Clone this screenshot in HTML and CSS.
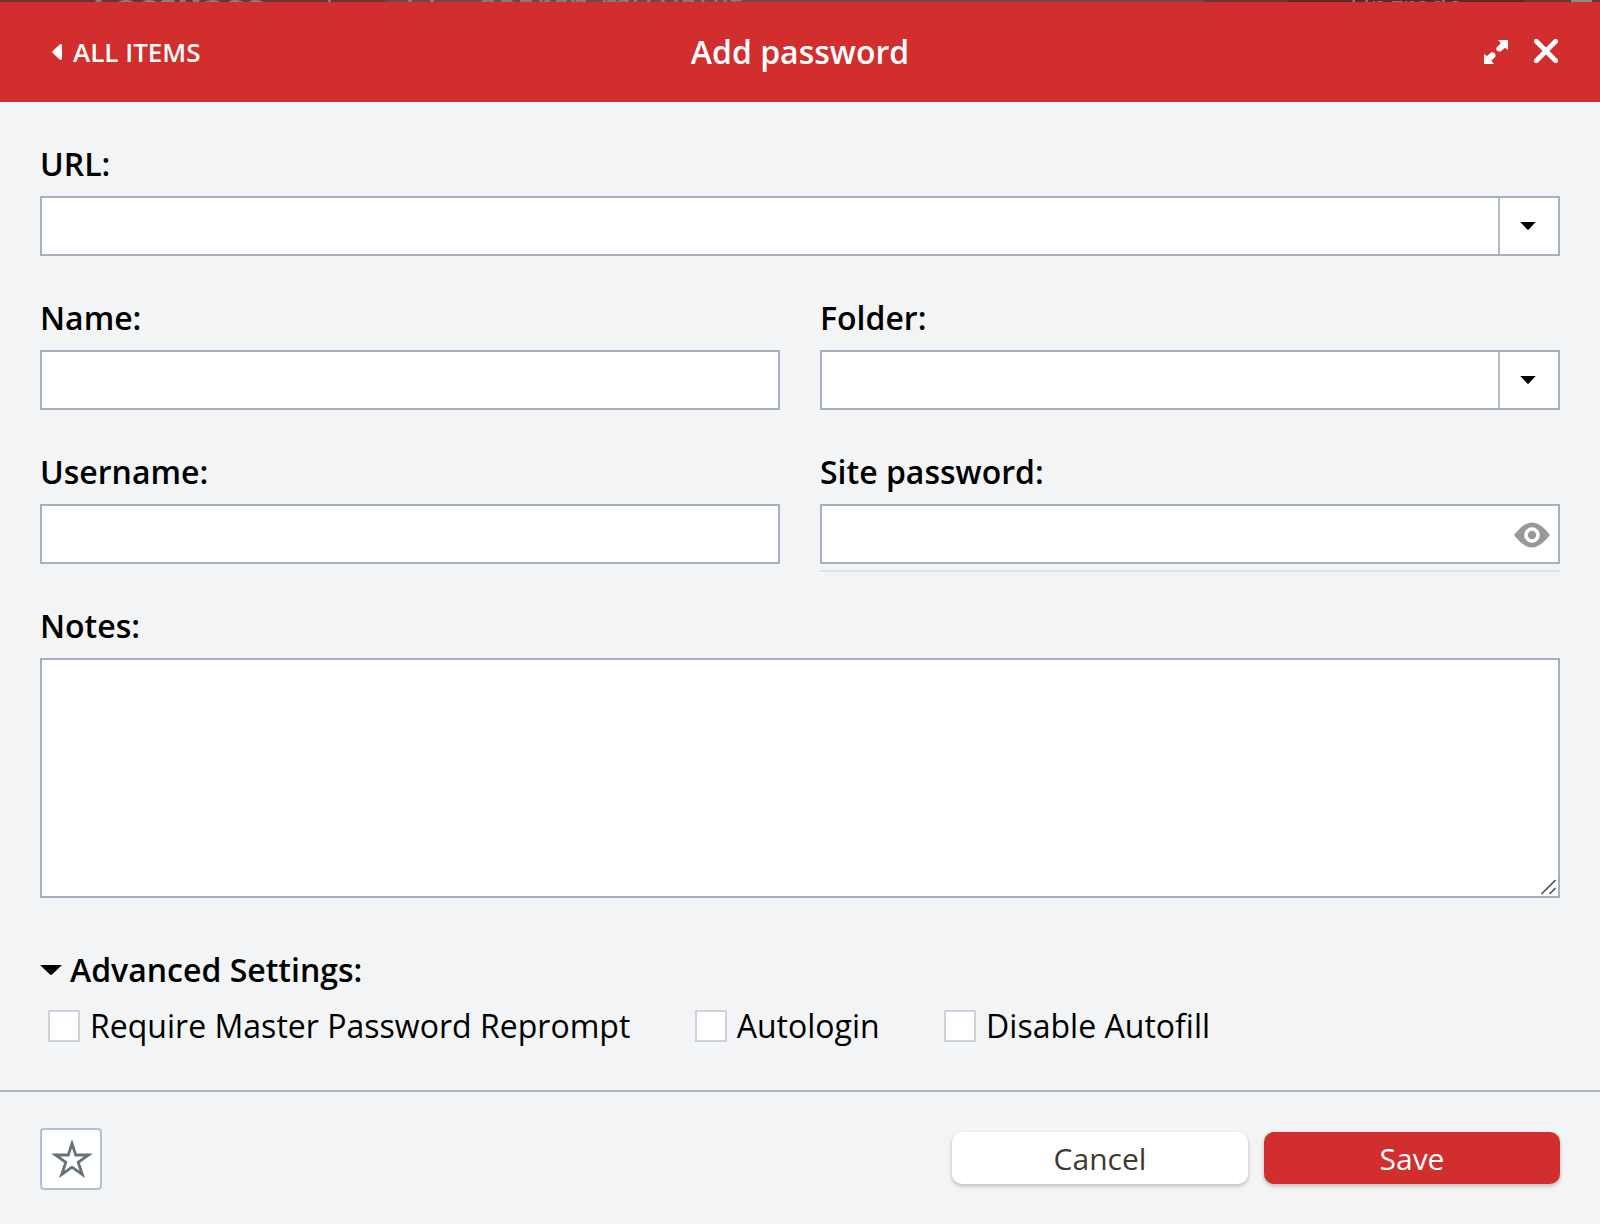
FILE: index.html
```html
<!DOCTYPE html>
<html lang="en">
<head>
<meta charset="utf-8">
<title>Add password</title>
<link rel="stylesheet" href="styles.css">
</head>
<body>
<div class="backdrop" aria-hidden="true">
  <span class="behind brand">LastPass</span>
  <span class="behind bar"></span>
  <span class="behind mark"></span>
  <span class="behind search">search my vault</span>
  <span class="behind upgrade">Upgrade</span>
  <span class="behind avatar"></span>
</div>
<form class="dialog">
  <header class="header">
    <a class="back"><svg width="10" height="16" viewBox="0 0 10 16"><path d="M10 1.2V14.8Q9.4 16.6 7.6 15.4L.8 9Q-.4 8 .8 7L7.6.6Q9.4-.6 10 1.2Z" fill="#fff"/></svg>ALL ITEMS</a>
    <h1 class="title">Add password</h1>
    <div class="tools">
      <svg width="24" height="24" viewBox="0 0 24 24"><path d="M14 0H24V10L21 7.8L16.500 11.500Q12 12 12.300 7.700L16.800 3.300ZM0 14L3 16L7.500 12.200Q12 12 11.500 16.500L7.400 20.700L10 24H0Z" fill="#fff"/></svg>
      <svg class="close" width="24" height="24" viewBox="0 0 24 24"><path d="M2.300 2.300L21.700 21.700M21.700 2.300L2.300 21.700" stroke="#fff" stroke-width="4.800" stroke-linecap="round"/></svg>
    </div>
  </header>
  <main class="fields">
    <div class="field wide">
      <label class="label" for="url">URL:</label>
      <div class="control"><input class="input" id="url"><span class="drop"><svg width="16" height="8" viewBox="0 0 16 8"><path d="M.3 0H15.700L9 7.300Q8 8.300 7 7.300Z"/></svg></span></div>
    </div>
    <div class="field">
      <label class="label" for="name">Name:</label>
      <div class="control"><input class="input" id="name"></div>
    </div>
    <div class="field">
      <label class="label" for="folder">Folder:</label>
      <div class="control"><input class="input" id="folder"><span class="drop"><svg width="16" height="8" viewBox="0 0 16 8"><path d="M.3 0H15.700L9 7.300Q8 8.300 7 7.300Z"/></svg></span></div>
    </div>
    <div class="field">
      <label class="label" for="user">Username:</label>
      <div class="control"><input class="input" id="user"></div>
    </div>
    <div class="field">
      <label class="label" for="pass">Site password:</label>
      <div class="control"><input class="input" id="pass"><svg class="eye" width="36" height="26" viewBox="0 0 36 26"><path d="M0 13Q9.500 .5 18 .5T36 13Q26.500 25.500 18 25.500T0 13Z" fill="#999"/><circle cx="18" cy="13" r="6" fill="#999" stroke="#fff" stroke-width="3.600"/></svg></div>
      <span class="strength"></span>
    </div>
    <div class="field wide">
      <label class="label" for="notes">Notes:</label>
      <div class="control notes"><textarea class="input area" id="notes"></textarea><svg class="grip" width="16" height="16" viewBox="0 0 16 16"><path d="M1.500 15L15.500 1M9.500 15L15.500 9" stroke="#555" stroke-width="1.700"/></svg></div>
    </div>
  </main>
  <section class="advanced">
    <h2 class="label summary"><svg width="22" height="10" viewBox="0 0 22 10"><path d="M0 0H22L12.300 9.200Q11 10.400 9.700 9.200Z"/></svg>Advanced Settings:</h2>
    <div class="options">
      <label class="option"><span class="box"></span>Require Master Password Reprompt</label>
      <label class="option"><span class="box"></span>Autologin</label>
      <label class="option"><span class="box"></span>Disable Autofill</label>
    </div>
  </section>
  <footer class="footer">
    <button type="button" class="star" aria-label="Favorite"><svg width="40" height="38" viewBox="0 0 40 38"><path d="M20 3.500L23.700 15H36.500L26.200 22.300L30.300 34.500L20 27.200L9.700 34.500L13.800 22.300L3.500 15H16.300Z" fill="none" stroke="#66717a" stroke-width="2.800"/></svg></button>
    <button type="button" class="button cancel">Cancel</button>
    <button type="button" class="button save">Save</button>
  </footer>
</form>
</body>
</html>
```
FILE: styles.css
```css
* { box-sizing: border-box; }
body {
  margin: 0;
  height: 1224px;
  overflow: hidden;
  background: #f2f4f6;
  color: #000;
  font-family: "Open Sans", "Noto Sans", sans-serif;
  font-size: 32px;
  line-height: 44px;
}
svg { display: block; flex: none; }
.backdrop {
  position: relative;
  height: 2px;
  overflow: hidden;
  background: linear-gradient(90deg, #6d3236 0 380px, #74444a 390px 1204px, #6d3236 1204px 1288px, #5f2529 1288px 1524px, #6d3236 1524px);
}
.behind { position: absolute; line-height: 32px; color: #8d7b7e; white-space: nowrap; }
.brand { left: 92px; bottom: -21px; font-weight: 700; font-size: 40px; }
.bar { left: 328px; bottom: 0; width: 3px; height: 2px; background: #8d7b7e; }
.mark { left: 408px; bottom: 0; width: 26px; height: 2px; border: solid #8d7b7e; border-width: 0 4px; }
.search { left: 479px; bottom: -20px; font-size: 36px; }
.upgrade { left: 1350px; bottom: -19px; font-size: 28px; }
.avatar { left: 1571px; bottom: 0; width: 21px; height: 2px; background: #8b8b8e; }
.header {
  display: grid;
  grid-template-columns: 1fr auto 1fr;
  align-items: center;
  height: 100px;
  padding: 0 42px 0 52px;
  background: #d12e2d;
  color: #fff;
}
.back { display: flex; align-items: center; gap: 11px; font-size: 26px; font-weight: 600; }
.title { margin: 0 10px 0 0; font-size: 32px; font-weight: 600; }
.tools { display: flex; justify-content: flex-end; gap: 26px; }
.close { margin-top: -1px; }
.fields {
  display: grid;
  grid-template-columns: 1fr 1fr;
  gap: 40px;
  padding: 40px 40px 0;
}
.field { position: relative; display: flex; flex-direction: column; gap: 10px; }
.wide { grid-column: 1 / -1; }
.label { margin: 0; font-size: 32px; font-weight: 600; }
.control { position: relative; display: flex; height: 60px; border: 2px solid #a8afbe; background: #fff; }
.notes { height: 240px; }
.input { flex: 1; min-width: 0; border: 0; padding: 0 12px; outline: 0; background: transparent; font: inherit; }
.area { resize: none; }
.drop {
  display: flex;
  align-items: center;
  width: 60px;
  padding-left: 20px;
  border-left: 2px solid #b6bbc9;
}
.eye { align-self: center; margin: 1px 8px 0 0; }
.grip { position: absolute; right: 2px; bottom: 1px; }
.strength { position: absolute; left: 0; right: 0; top: 120px; height: 2px; background: #e0e2e4; }
.advanced { padding: 50px 40px 0; }
.summary { display: flex; align-items: center; gap: 8px; }
.options { display: flex; gap: 64.300px; padding: 12px 8px 0; letter-spacing: .02px; }
.option { display: flex; align-items: center; gap: 10px; }
.box { width: 32px; height: 32px; border: 2px solid #cdd2dd; background: #fff; }
.footer {
  display: flex;
  align-items: flex-start;
  gap: 16px;
  margin-top: 42px;
  padding: 36px 40px 0;
  border-top: 2px solid #b3b6ba;
}
.star {
  display: grid;
  place-items: center;
  width: 62px;
  height: 62px;
  margin-right: auto;
  padding: 0 0 0 2px;
  border: 2px solid #b6bdd0;
  border-radius: 4px;
  background: #fff;
}
.button {
  width: 296px;
  height: 52px;
  margin-top: 4px;
  padding: 1px 0 0;
  border: 0;
  border-radius: 10px;
  font: 30px/51px "Open Sans", "Noto Sans", sans-serif;
  box-shadow: 0 2px 4px rgba(0, 0, 0, .24);
}
.cancel { background: #fff; color: #41392f; }
.save { background: #d12e2d; color: #fff; }
```
